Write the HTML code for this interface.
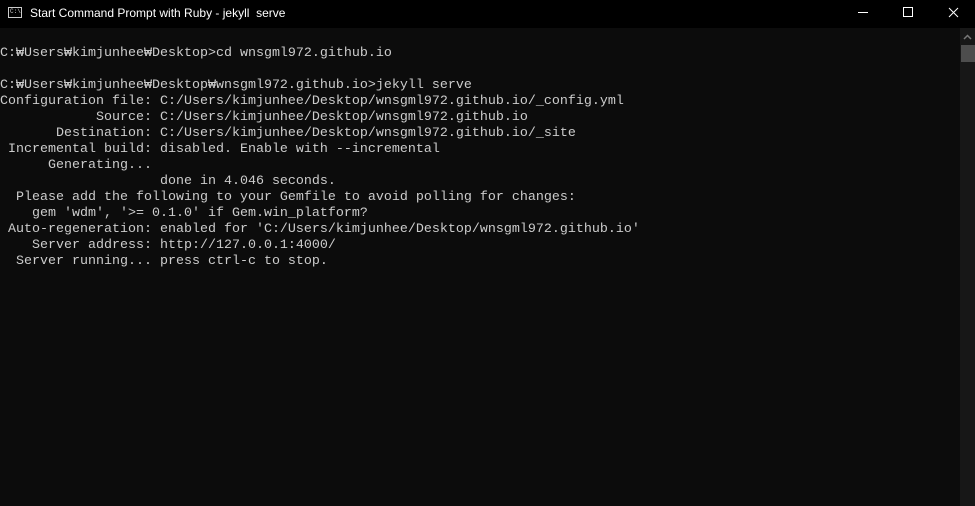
<!DOCTYPE html>
<html><head><style>
html,body{margin:0;padding:0;width:975px;height:506px;overflow:hidden;background:#0c0c0c}
.tb{position:absolute;left:0;top:0;width:975px;height:28px;background:#000;color:#fff;font:12px "Liberation Sans",sans-serif}
.tb .t{position:absolute;left:30px;top:6px}
.ic{position:absolute;left:8px;top:7px;width:14px;height:11px;border:1px solid #ccc;box-sizing:border-box;background:#000;font:6px "Liberation Mono",monospace;color:#ccc;line-height:8px;padding-left:1px}
pre{position:absolute;left:0;top:46px;margin:0;font:13.33px/16px "Liberation Mono","DejaVu Sans Mono",monospace;color:#cccccc;letter-spacing:0}
.sb{position:absolute;left:960px;top:28px;width:15px;height:478px;background:#171717}
.th{position:absolute;left:961px;top:45px;width:14px;height:17px;background:#4d4d4d}
</style></head><body>
<div class="tb"><div class="ic">C:\</div><div class="t">Start Command Prompt with Ruby - jekyll&nbsp; serve</div>
<svg style="position:absolute;left:850px;top:0" width="125" height="28">
<line x1="8" y1="12.5" x2="18" y2="12.5" stroke="#fff"/>
<rect x="53.5" y="7.5" width="9" height="9" fill="none" stroke="#fff"/>
<path d="M99 8L108 17M108 8L99 17" stroke="#fff"/>
</svg></div>
<div class="sb"></div><div class="th"></div>
<svg style="position:absolute;left:962px;top:33px" width="11" height="8"><path d="M2 6L5.5 2.5L9 6" stroke="#777" stroke-width="1.5" fill="none"/></svg>
<pre>C:₩Users₩kimjunhee₩Desktop>cd wnsgml972.github.io

C:₩Users₩kimjunhee₩Desktop₩wnsgml972.github.io>jekyll serve
Configuration file: C:/Users/kimjunhee/Desktop/wnsgml972.github.io/_config.yml
            Source: C:/Users/kimjunhee/Desktop/wnsgml972.github.io
       Destination: C:/Users/kimjunhee/Desktop/wnsgml972.github.io/_site
 Incremental build: disabled. Enable with --incremental
      Generating...
                    done in 4.046 seconds.
  Please add the following to your Gemfile to avoid polling for changes:
    gem 'wdm', '>= 0.1.0' if Gem.win_platform?
 Auto-regeneration: enabled for 'C:/Users/kimjunhee/Desktop/wnsgml972.github.io'
    Server address: http://127.0.0.1:4000/
  Server running... press ctrl-c to stop.</pre>
</body></html>
